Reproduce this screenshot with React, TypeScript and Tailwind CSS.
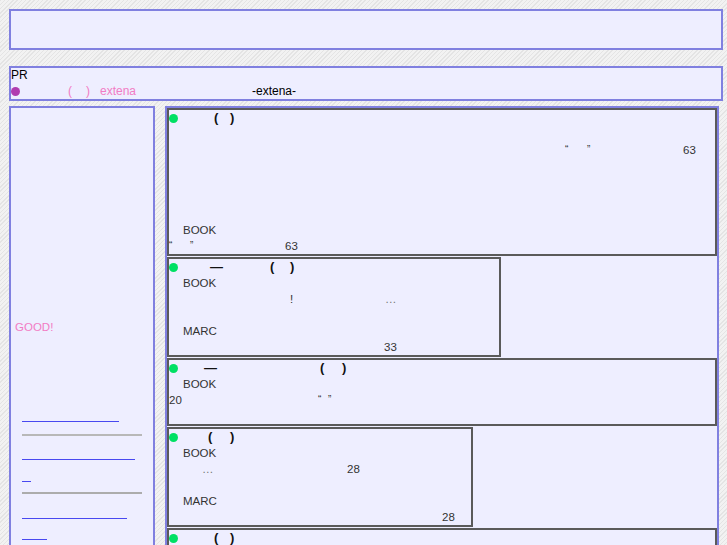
import React from "react";

const Dot = () => (
  <span className="inline-block w-[9px] h-[9px] rounded-full bg-[#00e064] shrink-0" />
);

const Line = ({ children }: { children?: React.ReactNode }) => (
  <div className="h-[16px] flex items-center whitespace-nowrap">{children}</div>
);

const P = ({ children }: { children: React.ReactNode }) => (
  <span className="font-bold text-[13px] text-[#111]">{children}</span>
);

const Item = ({ w, children }: { w: string; children: React.ReactNode }) => (
  <div className={`${w} border-2 border-[#5a5a5a] mb-px bg-[#eeeeff]`}>{children}</div>
);

export default function App() {
  return (
    <div className="h-[545px] overflow-hidden bg-[repeating-linear-gradient(135deg,#e4e4e4_0px,#e4e4e4_1px,#f2f2f2_1px,#f2f2f2_3px)] pt-[9px] pl-[9px] font-['Liberation_Sans',Arial,sans-serif] text-[#333]">
      <div className="w-[714px] h-[41px] border-2 border-[#8080e0] bg-[#eeeeff]" />
      <div className="w-[714px] h-[35px] mt-[16px] border-2 border-[#8080e0] bg-[#eeeeff] text-[12px] leading-[15px] text-black">
        <div className="h-[15px]">PR</div>
        <div className="h-[15px] mt-[1px] flex items-center whitespace-nowrap">
          <span className="inline-block w-[9px] h-[9px] rounded-full bg-[#b03cb0]" />
          <span className="ml-[48px] w-[18px] text-[#f27cc4]">(</span>
          <span className="w-[14px] text-[#f27cc4]">)</span>
          <span className="w-[152px] text-[#f27cc4]">extena</span>
          <span>-extena-</span>
        </div>
      </div>
      <div className="flex gap-[10px] mt-[5px]">
        <div className="w-[146px] h-[600px] border-2 border-[#8080e0] bg-[#eeeeff] flex flex-col">
          <div className="mt-[211px] ml-[4px] h-[16px] leading-[16px] text-[11.5px] text-[#f27cc4]">GOOD!</div>
          <div className="mt-[73px] ml-[11px] w-[97px] h-[14px] border-b border-[#4848f0]" />
          <div className="mt-[12px] ml-[11px] w-[120px] h-[2px] bg-[#b8b8b8]" />
          <div className="mt-[10px] ml-[11px] w-[113px] h-[14px] border-b border-[#4848f0]" />
          <div className="mt-[8px] ml-[11px] w-[9px] h-[14px] border-b border-[#4848f0]" />
          <div className="mt-[10px] ml-[11px] w-[120px] h-[2px] bg-[#acacac]" />
          <div className="mt-[11px] ml-[11px] w-[105px] h-[14px] border-b border-[#4848f0]" />
          <div className="mt-[7px] ml-[11px] w-[25px] h-[14px] border-b border-[#4848f0]" />
        </div>
        <div className="w-[554px] h-[600px] border-2 border-[#8080e0] bg-[#eeeeff] text-[11.5px] leading-[16px]">
          <Item w="w-full">
            <Line>
              <Dot />
              <span className="ml-[36px] w-[16px]"><P>(</P></span>
              <P>)</P>
            </Line>
            <Line />
            <Line>
              <span className="ml-[396px] w-[22px] text-[10px]">“</span>
              <span className="w-[96px] text-[10px]">”</span>
              <span>63</span>
            </Line>
            <Line />
            <Line />
            <Line />
            <Line />
            <Line>
              <span className="ml-[14px]">BOOK</span>
            </Line>
            <Line>
              <span className="w-[21px] text-[10px]">“</span>
              <span className="w-[95px] text-[10px]">”</span>
              <span>63</span>
            </Line>
          </Item>
          <Item w="w-[334px]">
            <Line>
              <Dot />
              <span className="ml-[32px] w-[60px]"><P>—</P></span>
              <span className="w-[20px]"><P>(</P></span>
              <P>)</P>
            </Line>
            <Line>
              <span className="ml-[14px]">BOOK</span>
            </Line>
            <Line>
              <span className="ml-[121px] w-[95px]">!</span>
              <span className="text-[#777]">…</span>
            </Line>
            <Line />
            <Line>
              <span className="ml-[14px]">MARC</span>
            </Line>
            <Line>
              <span className="ml-[215px]">33</span>
            </Line>
          </Item>
          <Item w="w-full">
            <Line>
              <Dot />
              <span className="ml-[26px] w-[116px]"><P>—</P></span>
              <span className="w-[22px]"><P>(</P></span>
              <P>)</P>
            </Line>
            <Line>
              <span className="ml-[14px]">BOOK</span>
            </Line>
            <Line>
              <span className="w-[149px]">20</span>
              <span className="w-[10px] text-[10px]">“</span>
              <span className="text-[10px]">”</span>
            </Line>
            <Line />
          </Item>
          <Item w="w-[306px]">
            <Line>
              <Dot />
              <span className="ml-[30px] w-[22px]"><P>(</P></span>
              <P>)</P>
            </Line>
            <Line>
              <span className="ml-[14px]">BOOK</span>
            </Line>
            <Line>
              <span className="ml-[33px] w-[145px] text-[#777]">…</span>
              <span>28</span>
            </Line>
            <Line />
            <Line>
              <span className="ml-[14px]">MARC</span>
            </Line>
            <Line>
              <span className="ml-[273px]">28</span>
            </Line>
          </Item>
          <Item w="w-full">
            <Line>
              <Dot />
              <span className="ml-[36px] w-[16px]"><P>(</P></span>
              <P>)</P>
            </Line>
            <Line />
            <Line />
          </Item>
        </div>
      </div>
    </div>
  );
}
